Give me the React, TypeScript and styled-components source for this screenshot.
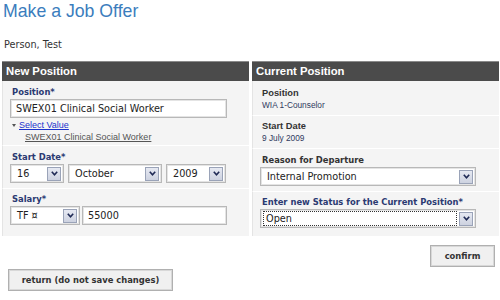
import React from "react";
import styled, { createGlobalStyle } from "styled-components";

const Global = createGlobalStyle`
  html, body { margin: 0; padding: 0; background: #fff; }
  body { font-family: "DejaVu Sans", Verdana, sans-serif; color: #333; }
`;

const Page = styled.div`
  width: 500px;
  height: 300px;
  box-sizing: border-box;
  padding: 1px 1px 0 2px;
  display: flex;
  flex-direction: column;
`;

const Title = styled.h1`
  margin: 0 0 0 1px;
  font-family: "Liberation Sans", Arial, sans-serif;
  font-weight: normal;
  font-size: 17.7px;
  line-height: 20px;
  color: #3b7dbd;
`;

const Person = styled.div`
  margin: 18px 0 0 2px;
  font-size: 9.7px;
  line-height: 12px;
  color: #333;
`;

const Panels = styled.div`
  margin-top: 10px;
  display: grid;
  grid-template-columns: 247px 247px;
  column-gap: 3px;
`;

const Panel = styled.section`
  display: flex;
  flex-direction: column;
  background: #f4f4f4;
`;

const PanelHeader = styled.div`
  height: 19px;
  border-top: 1px solid #8a8a8a;
  background: #4b4b4b;
  color: #fff;
  font-family: "Liberation Sans", Arial, sans-serif;
  font-weight: bold;
  font-size: 11.3px;
  line-height: 19px;
  padding-left: 4px;
`;

const Row = styled.div<{ $pt: number; $pb: number; $last?: boolean }>`
  padding: ${(p) => p.$pt}px 6px ${(p) => p.$pb}px 7px;
  border-left: 1px solid #e4e4e4;
  border-bottom: ${(p) => (p.$last ? "none" : "1px solid #fff")};
  ${(p) => (p.$last ? "flex: 1;" : "")}
  display: flex;
  flex-direction: column;
`;

const FieldLabel = styled.div<{ $required?: boolean }>`
  font-weight: bold;
  font-size: 8.4px;
  line-height: 11px;
  padding-left: 2px;
  color: ${(p) => (p.$required ? "#2b3a72" : "#333")};
  margin-bottom: 1px;
`;

const StaticLabel = styled.div`
  font-family: "Liberation Sans", Arial, sans-serif;
  font-weight: bold;
  font-size: 9.3px;
  line-height: 12px;
  padding-left: 2px;
  color: #333;
`;

const StaticValue = styled.div`
  font-family: "Liberation Sans", Arial, sans-serif;
  font-size: 8.3px;
  line-height: 13px;
  padding-left: 2px;
  color: #2f3a5e;
`;

const TextBox = styled.div<{ $w: number }>`
  width: ${(p) => p.$w}px;
  height: 19px;
  box-sizing: border-box;
  background: #fff;
  border: 1px solid #b8b8b8;
  box-shadow: inset 0 0 0 1px #e4e4e4;
  font-size: 9.7px;
  line-height: 17px;
  padding-left: 5px;
  color: #222;
  white-space: nowrap;
  overflow: hidden;
`;

const Controls = styled.div`
  display: flex;
  gap: 4px;
`;

const SelectBox = styled.div<{ $w: number }>`
  width: ${(p) => p.$w}px;
  height: 19px;
  box-sizing: border-box;
  background: #fff;
  border: 1px solid #b8b8b8;
  box-shadow: inset 0 0 0 1px #e4e4e4;
  display: flex;
  align-items: center;
  padding: 0 2px 0 2px;
  font-size: 9.7px;
  color: #222;
`;

const SelectText = styled.div<{ $focus?: boolean }>`
  flex: 1;
  height: 15px;
  line-height: 13px;
  box-sizing: border-box;
  padding-left: ${(p) => (p.$focus ? "2px" : "3px")};
  border: 1px ${(p) => (p.$focus ? "dotted #333" : "solid transparent")};
  white-space: nowrap;
  overflow: hidden;
`;

const ArrowBtn = styled.div`
  width: 14px;
  height: 14px;
  box-sizing: border-box;
  margin-left: 2px;
  border: 1px solid #9aa3b8;
  background: linear-gradient(#e6e9f2, #cdd2e0);
  display: flex;
  align-items: center;
  justify-content: center;
`;

const LinkLine = styled.div<{ $indent: number }>`
  font-family: "Liberation Sans", Arial, sans-serif;
  font-size: 9px;
  line-height: 12px;
  padding-left: ${(p) => p.$indent}px;
  display: flex;
  align-items: center;
  gap: 3px;
`;

const Link = styled.a<{ $muted?: boolean }>`
  color: ${(p) => (p.$muted ? "#555" : "#1a33cc")};
  text-decoration: underline;
  cursor: pointer;
`;

const Tri = styled.span`
  width: 0;
  height: 0;
  border-left: 2px solid transparent;
  border-right: 2px solid transparent;
  border-top: 3px solid #555;
`;

const ConfirmRow = styled.div`
  display: flex;
  justify-content: flex-end;
  padding: 9px 4px 0 0;
`;

const ReturnRow = styled.div`
  display: flex;
  padding: 2px 0 0 6px;
`;

const Button = styled.button<{ $w: number }>`
  width: ${(p) => p.$w}px;
  height: 22px;
  box-sizing: border-box;
  border: 1px solid #b0b0b0;
  box-shadow: inset 0 0 0 1px #d8d8d8;
  background: #f0f0f0;
  font-family: "DejaVu Sans", Verdana, sans-serif;
  font-weight: bold;
  font-size: 8.4px;
  color: #333;
  padding: 0;
`;

const Chevron = () => (
  <svg width="7" height="5" viewBox="0 0 7 5">
    <path d="M0.8 0.8 L3.5 3.8 L6.2 0.8" fill="none" stroke="#1f2a55" strokeWidth="1.6" />
  </svg>
);

const Select: React.FC<{ w: number; value: string; focus?: boolean }> = ({ w, value, focus }) => (
  <SelectBox $w={w}>
    <SelectText $focus={focus}>{value}</SelectText>
    <ArrowBtn>
      <Chevron />
    </ArrowBtn>
  </SelectBox>
);

export default function App() {
  return (
    <>
      <Global />
      <Page>
        <Title>Make a Job Offer</Title>
        <Person>Person, Test</Person>
        <Panels>
          <Panel>
            <PanelHeader>New Position</PanelHeader>
            <Row $pt={6} $pb={2}>
              <FieldLabel $required>Position*</FieldLabel>
              <TextBox $w={217}>SWEX01 Clinical Social Worker</TextBox>
              <LinkLine $indent={2} style={{ marginTop: 1 }}>
                <Tri />
                <Link>Select Value</Link>
              </LinkLine>
              <LinkLine $indent={15}>
                <Link $muted>SWEX01 Clinical Social Worker</Link>
              </LinkLine>
            </Row>
            <Row $pt={6} $pb={5}>
              <FieldLabel $required>Start Date*</FieldLabel>
              <Controls>
                <Select w={54} value="16" />
                <Select w={94} value="October" />
                <Select w={60} value="2009" />
              </Controls>
            </Row>
            <Row $pt={5} $pb={8} $last>
              <FieldLabel $required>Salary*</FieldLabel>
              <Controls>
                <Select w={70} value="TF ¤" />
                <TextBox $w={145} style={{ marginLeft: -2 }}>55000</TextBox>
              </Controls>
            </Row>
          </Panel>
          <Panel>
            <PanelHeader>Current Position</PanelHeader>
            <Row $pt={6} $pb={3}>
              <StaticLabel>Position</StaticLabel>
              <StaticValue>WIA 1-Counselor</StaticValue>
            </Row>
            <Row $pt={4} $pb={3}>
              <StaticLabel>Start Date</StaticLabel>
              <StaticValue>9 July 2009</StaticValue>
            </Row>
            <Row $pt={6} $pb={5}>
              <FieldLabel>Reason for Departure</FieldLabel>
              <Select w={216} value="Internal Promotion" />
            </Row>
            <Row $pt={5} $pb={8} $last>
              <FieldLabel $required>Enter new Status for the Current Position*</FieldLabel>
              <Select w={216} value="Open" focus />
            </Row>
          </Panel>
        </Panels>
        <ConfirmRow>
          <Button $w={65}>confirm</Button>
        </ConfirmRow>
        <ReturnRow>
          <Button $w={165}>return (do not save changes)</Button>
        </ReturnRow>
      </Page>
    </>
  );
}
